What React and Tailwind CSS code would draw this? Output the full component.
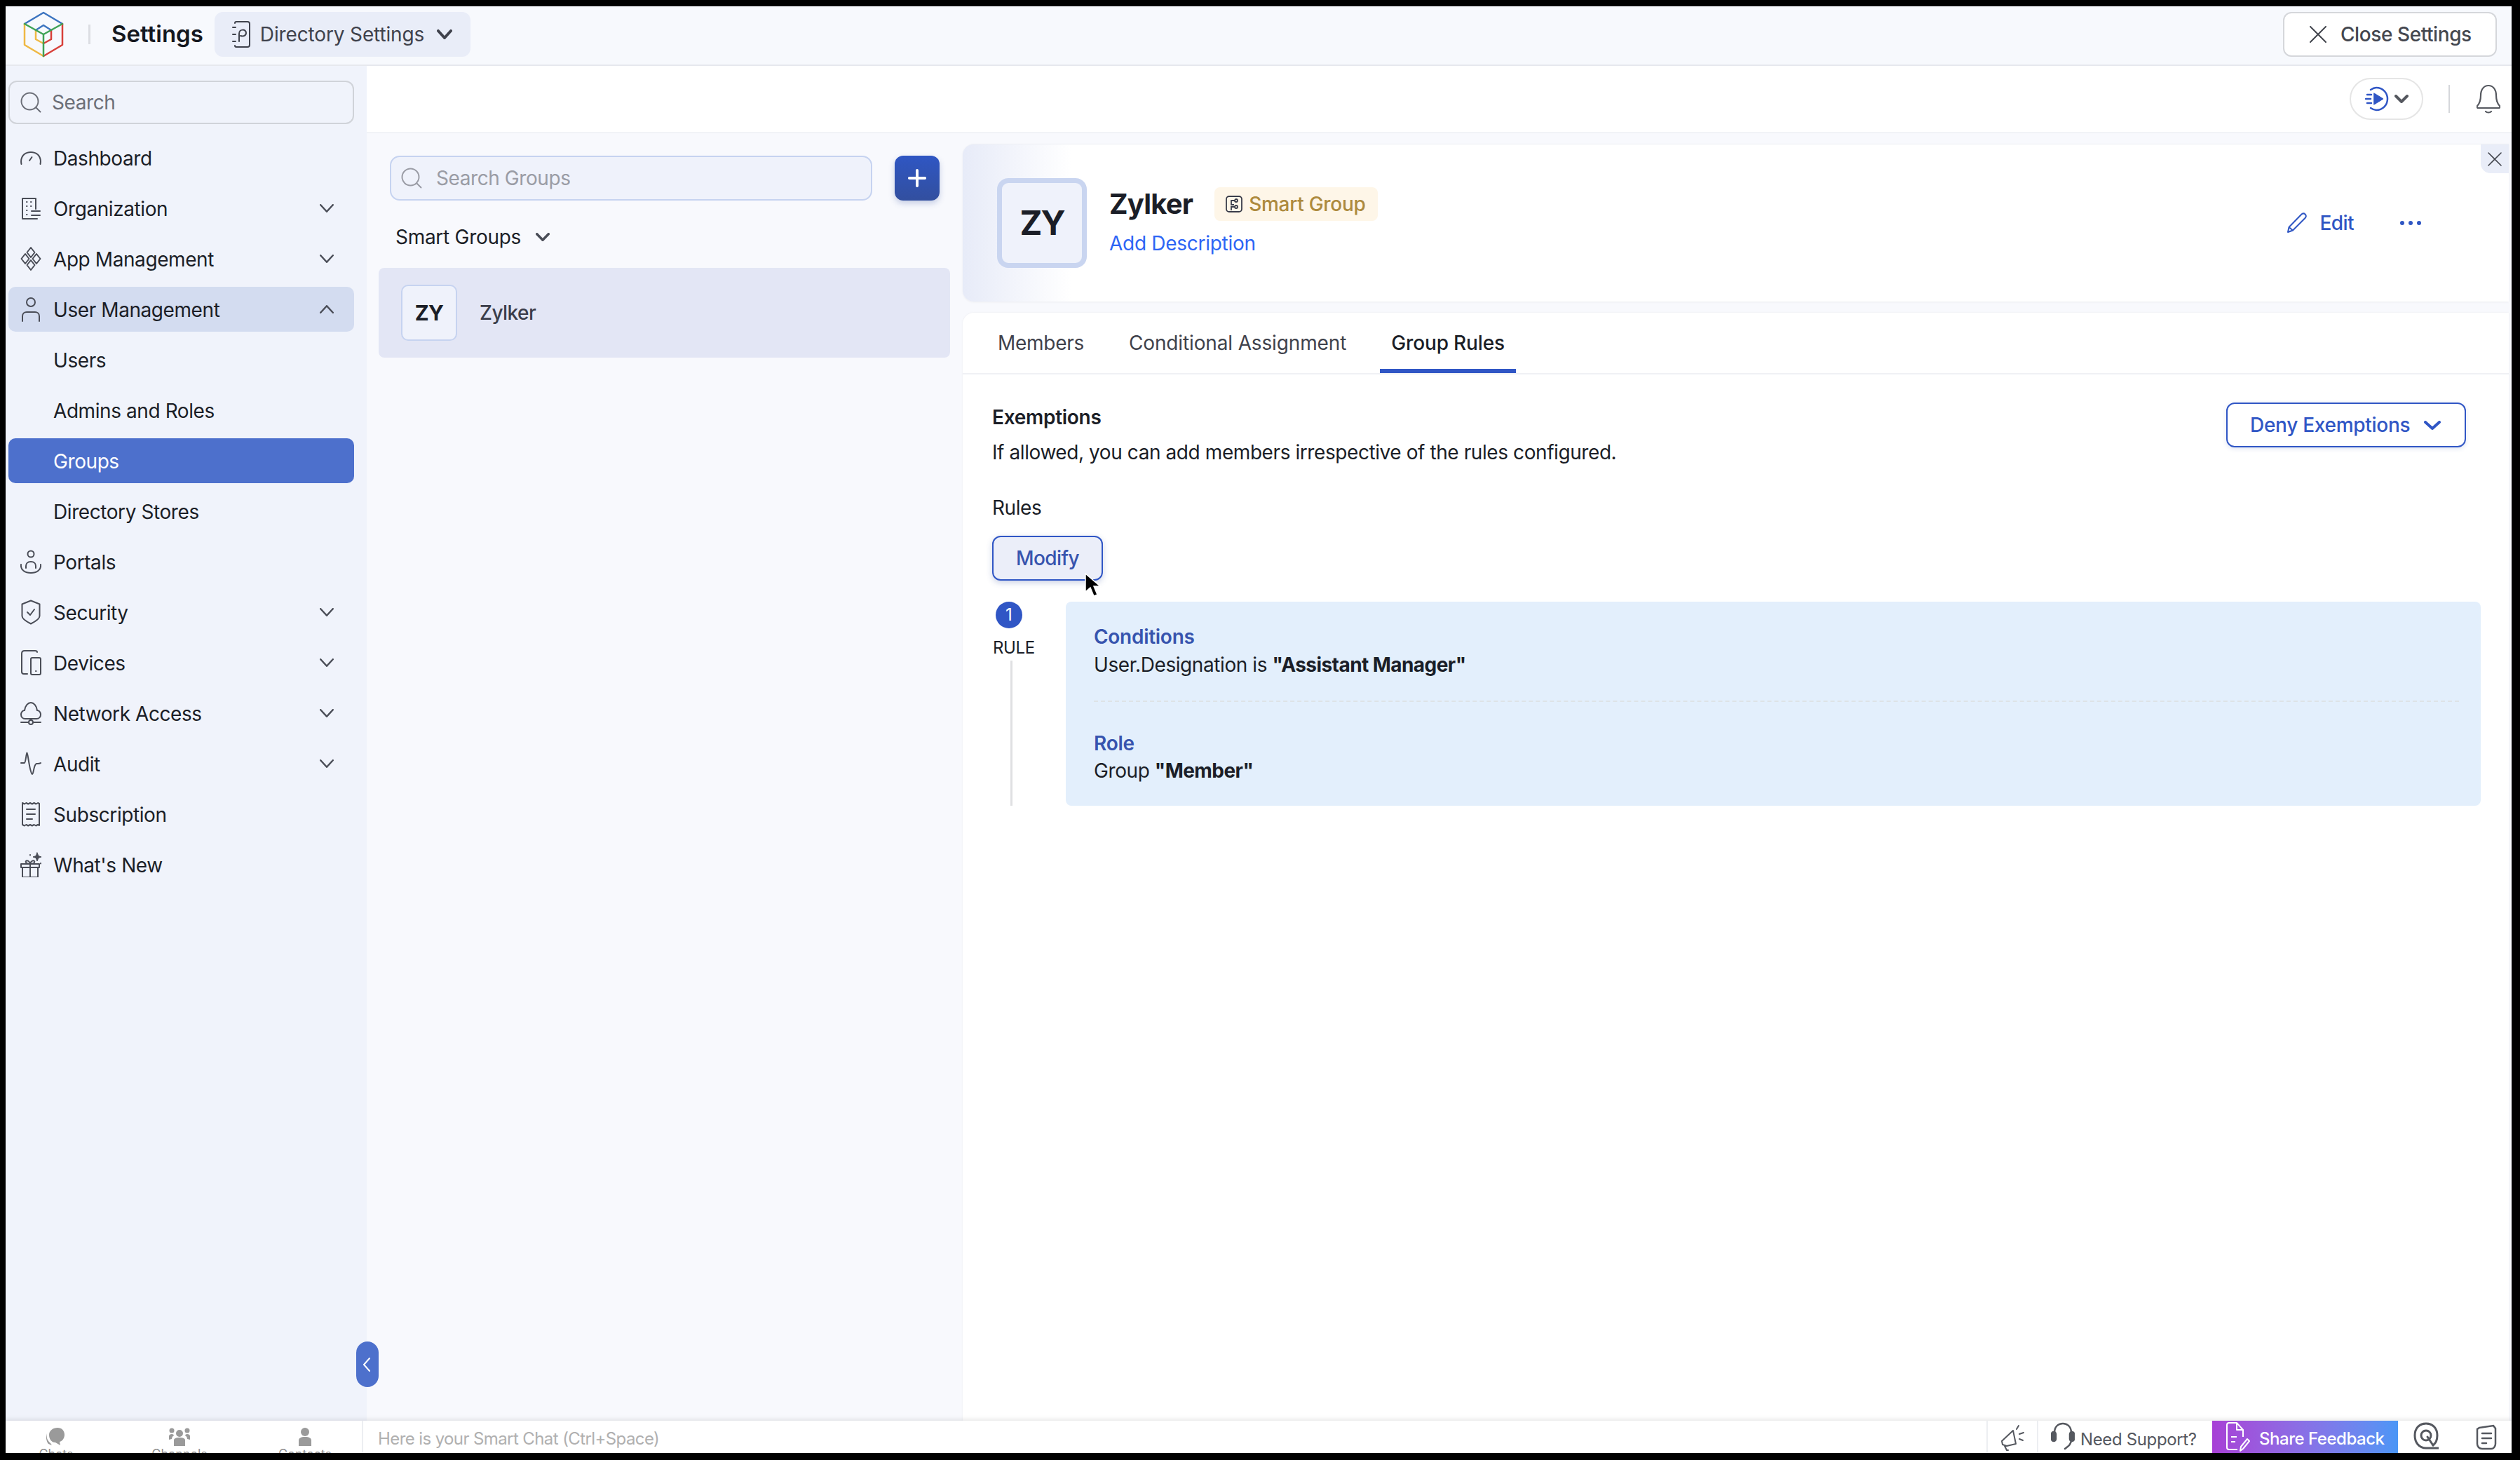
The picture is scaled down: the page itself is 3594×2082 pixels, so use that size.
import React from "react";
import { Search, Plus } from "lucide-react";

const Ico = ({ children, w = 30, h = 36, vb = "0 0 30 36", className = "" }) => (
  <svg
    width={w}
    height={h}
    viewBox={vb}
    fill="none"
    stroke="currentColor"
    strokeWidth="2"
    strokeLinecap="round"
    strokeLinejoin="round"
    className={`shrink-0 ${className}`}
  >
    {children}
  </svg>
);

// lucide's chevrons and crosses sit small in their box, these fill it
const Chevron = ({ w = 20, h = 12, stroke = 2.5, up = false, className = "" }) => (
  <svg width={w} height={h} viewBox={`0 0 ${w} ${h}`} fill="none" stroke="currentColor" strokeWidth={stroke} strokeLinecap="round" strokeLinejoin="round" className={`shrink-0 ${className}`}>
    {up ? (
      <path d={`M${stroke / 2} ${h - stroke / 2}L${w / 2} ${stroke / 2}L${w - stroke / 2} ${h - stroke / 2}`} />
    ) : (
      <path d={`M${stroke / 2} ${stroke / 2}L${w / 2} ${h - stroke / 2}L${w - stroke / 2} ${stroke / 2}`} />
    )}
  </svg>
);

const Cross = ({ size = 24, stroke = 2, className = "" }) => (
  <svg width={size} height={size} viewBox={`0 0 ${size} ${size}`} fill="none" stroke="currentColor" strokeWidth={stroke} strokeLinecap="round" className={`shrink-0 ${className}`}>
    <path d={`M1 1L${size - 1} ${size - 1}M${size - 1} 1L1 ${size - 1}`} />
  </svg>
);

const icons = {
  dashboard: (
    <Ico>
      <path d="M1.500 27c-1-5 0-10 3.500-13.500C8 11 11 10 15 10s7 1 10 3.500c3.500 3.500 4.500 8.500 3.500 13.500" />
      <path d="M13 22l3.500-5" />
    </Ico>
  ),
  organization: (
    <Ico>
      <path d="M3 33V4h19v15M3 33h21" />
      <path d="M9 9h.5M15 9h.5M9 15h.5M15 15h.5M9 21h.5M9 27h.5M16 22h12M16 28h12" />
    </Ico>
  ),
  apps: (
    <Ico>
      <path d="M15 2l5.500 7-5.500 7-5.500-7zM15 20l5.500 7-5.500 7-5.500-7zM7 11l5.500 7L7 25l-5.500-7zM23 11l5.500 7-5.500 7-5.500-7z" />
    </Ico>
  ),
  user: (
    <Ico>
      <circle cx="15" cy="8" r="6" />
      <path d="M3 35v-7c0-4 3-6 6-6h12c3 0 6 2 6 6v7" />
    </Ico>
  ),
  portals: (
    <Ico>
      <circle cx="15" cy="7" r="4.500" />
      <path d="M8 27v-3c0-3 2-6 7-6s7 3 7 6v3" />
      <path d="M1 22c-1 8 6 12 14 12s15-4 14-12" />
    </Ico>
  ),
  security: (
    <Ico>
      <path d="M15 1.500l12.500 5v17c0 4-6.500 8-12.500 11-6-3-12.500-7-12.500-11v-17z" />
      <path d="M10 18l4 4 6-8" />
    </Ico>
  ),
  devices: (
    <Ico>
      <path d="M24 3c0-1-1-2-3-2H6C3.500 1 2 2.500 2 5v26c0 2 1.500 3 3 3h5" />
      <rect x="15" y="11" width="14" height="24" rx="2" />
      <path d="M22 30h.5" />
    </Ico>
  ),
  network: (
    <Ico>
      <path d="M7 26c-4 0-6-3-6-6 0-4 3-6 5-6 1-7 5-11 9-11s8 4 9 11c2 0 5 2 5 6 0 3-2 6-6 6z" />
      <path d="M1 31h10M19 31h10M15 26v2" />
      <circle cx="15" cy="31" r="3" />
    </Ico>
  ),
  audit: (
    <Ico>
      <path d="M1 17h5c1.500 0 2.500-14 3.500-14.500C11 3 13 30 17 33c2 0 2-14 6-15 2 0 5 0 6-1" />
    </Ico>
  ),
  subscription: (
    <Ico>
      <path d="M3 2l2.800 1.500L8.400 2l2.800 1.500L14 2l2.800 1.500L19.600 2l2.800 1.500L25 2l2 1v31l-2-1-2.800 1.500-2.600-1.500-2.800 1.500L14 33l-2.800 1.500L8.400 33l-2.600 1.500L3 33z" />
      <path d="M9 11h12M9 18h12M9 25h8" />
    </Ico>
  ),
  gift: (
    <Ico>
      <path d="M3 22h22v14H3zM1 17h26v5H1zM14 17v19M14 17c-5 0-7-2-6-4 1-1.500 5-1 6 4 1-5 5-5.500 6-4 1 2-1 4-6 4z" />
      <path d="M24 1l1.800 4.500L30 7l-4.200 1.500L24 13l-1.800-4.500L18 7l4.200-1.500z" fill="currentColor" strokeWidth="1" />
      <path d="M14 4v.5M29 16v.5" />
    </Ico>
  ),
};

const navItems = [
  { label: "Dashboard", icon: "dashboard" },
  { label: "Organization", icon: "organization", arrow: "down" },
  { label: "App Management", icon: "apps", arrow: "down" },
  { label: "User Management", icon: "user", arrow: "up", open: true },
  { label: "Users" },
  { label: "Admins and Roles" },
  { label: "Groups", active: true },
  { label: "Directory Stores" },
  { label: "Portals", icon: "portals" },
  { label: "Security", icon: "security", arrow: "down" },
  { label: "Devices", icon: "devices", arrow: "down" },
  { label: "Network Access", icon: "network", arrow: "down" },
  { label: "Audit", icon: "audit", arrow: "down" },
  { label: "Subscription", icon: "subscription" },
  { label: "What's New", icon: "gift" },
];

const Logo = () => (
  <svg width="60" height="68" viewBox="32 14 60 68" fill="none" strokeWidth="2.500" strokeLinejoin="round" strokeLinecap="round" className="shrink-0">
    <path d="M35 33L62 17l27 16" stroke="#3b74c0" />
    <path d="M51 42l11-7 11 7" stroke="#3b74c0" />
    <path d="M35 33v30l27 16" stroke="#efb944" />
    <path d="M51 42v13l11 6" stroke="#efb944" />
    <path d="M89 33v30L62 79" stroke="#d8403a" />
    <path d="M73 42v13l-11 6" stroke="#d8403a" />
    <path d="M35 33l27 15 27-15M62 48v31" stroke="#3fa355" />
  </svg>
);

const BookIcon = ({ className = "" }) => (
  <svg width="26" height="38" viewBox="0 0 26 38" fill="none" stroke="currentColor" strokeWidth="2" strokeLinecap="round" strokeLinejoin="round" className={`shrink-0 ${className}`}>
    <path d="M4 3c0-1 1-2 2-2h16c2 0 3 1 3 3v30c0 2-1 3-3 3H6c-1 0-2-1-2-2" />
    <path d="M1 9h4M1 19h4M1 29h4" />
    <path d="M10 29v-11c0-7 10-7 10-1 0 5-6 5-8 4" />
  </svg>
);

function Header() {
  return (
    <header className="flex h-[85px] shrink-0 items-center border-b-2 border-[#e6e8ee] bg-[#f7f9fd] pb-[3px]">
      <div className="ml-[24px] flex items-center">
        <Logo />
        <div className="ml-[34px] h-[28px] w-[3px] bg-[#dcdee3]" />
        <span className="ml-[30px] text-[33px] font-semibold text-[#15181f]">Settings</span>
        <div className="ml-[16px] flex h-[64px] w-[365px] items-center rounded-[12px] bg-[#e9edf8] pl-[25px] text-[#3f424c]">
          <BookIcon />
          <span className="ml-[14px] text-[28px] tracking-[-0.005em]">Directory Settings</span>
          <Chevron w={22} h={14} stroke={4} className="ml-[18px]" />
        </div>
      </div>
      <div className="ml-auto mr-[21px] flex h-[64px] w-[305px] items-center rounded-[12px] border-2 border-[#d5d7db] bg-white pl-[36px] text-[#44474f]">
        <Cross size={24} stroke={2} />
        <span className="ml-[20px] text-[28px] font-medium tracking-[-0.015em]">Close Settings</span>
      </div>
    </header>
  );
}

function Sidebar() {
  return (
    <aside className="relative flex w-[515px] shrink-0 flex-col bg-[#f0f3fb] pl-[4px] pr-[18px] pt-[21px]">
      <div className="flex h-[62px] items-center rounded-[12px] border-2 border-[#d0d3d9] pl-[12px] text-[#6c6f78]">
        <Search size={36} strokeWidth={1.3} />
        <span className="ml-[12px] text-[28px] tracking-[-0.015em]">Search</span>
      </div>
      <nav className="mt-[16px] flex flex-col gap-[8px]">
        {navItems.map((item) => (
          <div
            key={item.label}
            className={`flex h-[64px] items-center rounded-[10px] pl-[17px] ${
              item.active ? "bg-[#4d70cc] text-white" : item.open ? "bg-[#d3dcf0] text-[#1b1e27]" : "text-[#1b1e27]"
            }`}
          >
            <span className="flex w-[30px] justify-center text-[#4a4d57]">{item.icon && icons[item.icon]}</span>
            <span className="ml-[17px] pt-[2px] text-[28px] tracking-[-0.015em]">{item.label}</span>
            {item.arrow === "down" && <Chevron className="ml-auto mr-[29px] text-[#4a4d57]" />}
            {item.arrow === "up" && <Chevron up className="ml-auto mr-[29px] text-[#4a4d57]" />}
          </div>
        ))}
      </nav>
      <div className="absolute bottom-[48px] right-[-17px] z-10 flex h-[65px] w-[32px] items-center justify-center rounded-full bg-[#4d70cc] pr-[3px] text-white">
        <svg width="12" height="20" viewBox="0 0 12 20" fill="none" stroke="currentColor" strokeWidth="2" strokeLinecap="round" strokeLinejoin="round">
          <path d="M10 1L2 10l8 9" />
        </svg>
      </div>
    </aside>
  );
}

function GroupList() {
  return (
    <section className="w-[850px] shrink-0 pt-[32px]">
      <div className="ml-[33px] flex items-center gap-[32px]">
        <div className="flex h-[64px] w-[688px] items-center rounded-[14px] border-2 border-[#c6d3f0] bg-[#eff2fb] pl-[11px] text-[#9a9ca5]">
          <Search size={36} strokeWidth={1.3} />
          <span className="ml-[17px] text-[28px] tracking-[-0.015em]">Search Groups</span>
        </div>
        <div className="flex h-[64px] w-[64px] items-center justify-center rounded-[12px] bg-gradient-to-b from-[#2f56c3] to-[#324f9f] text-white shadow-[0_4px_8px_rgba(50,80,160,0.25)]">
          <Plus size={38} strokeWidth={2.500} />
        </div>
      </div>
      <div className="ml-[41px] mt-[32px] flex h-[40px] items-center text-[#1b1e27]">
        <span className="text-[28px] tracking-[-0.01em]">Smart Groups</span>
        <Chevron stroke={3.5} className="ml-[21px] text-[#4a4d57]" />
      </div>
      <div className="ml-[17px] mt-[24px] flex h-[128px] w-[815px] items-center rounded-[8px] bg-[#e3e6f5] pl-[32px]">
        <div className="flex h-[80px] w-[80px] items-center justify-center rounded-[10px] border-2 border-[#c6d3f0] bg-[#eff2fb] text-[30px] font-bold tracking-[-0.02em] text-[#1b1e27]">
          ZY
        </div>
        <span className="ml-[32px] text-[28px] font-medium tracking-[-0.02em] text-[#3a3d4a]">Zylker</span>
      </div>
    </section>
  );
}

function GroupHeader() {
  return (
    <div className="relative flex h-[225px] shrink-0 items-center rounded-l-[16px] border-t border-[#eef0f5] bg-gradient-to-r from-[#e7ebf8] to-white to-[7%] pl-[49px] pr-[125px] shadow-[0_1px_3px_rgba(0,0,0,0.05)]">
      <div className="flex h-[128px] w-[128px] items-center justify-center rounded-[16px] border-[7px] border-[#c9d5f0] bg-[#eff2fb] text-[48px] font-bold tracking-[-0.04em] text-[#1b1e27]">
        ZY
      </div>
      <div className="ml-[32px] pb-[2px]">
        <div className="flex items-center">
          <span className="text-[40px] font-bold leading-[48px] tracking-[-0.02em] text-[#1b1e27]">Zylker</span>
          <div className="ml-[31px] flex h-[48px] w-[233px] items-center rounded-[8px] bg-[#fef6e8] pl-[16px] text-[#ad8a3e]">
            <svg width="24" height="24" viewBox="0 0 24 24" fill="none" stroke="#3a3d4a" strokeWidth="1.800" className="shrink-0">
              <rect x="1" y="1" width="22" height="22" rx="4" />
              <circle cx="15" cy="7" r="2" />
              <circle cx="15" cy="16" r="2" />
              <path d="M13 7H8v6h4M13 16H8v5" />
            </svg>
            <span className="ml-[9px] text-[28px] font-medium tracking-[-0.01em]">Smart Group</span>
          </div>
        </div>
        <div className="mt-[12px] text-[28px] leading-[40px] tracking-[-0.01em] text-[#2d65f5]">Add Description</div>
      </div>
      <div className="ml-auto flex items-center text-[#2f56c3]">
        <svg width="30" height="30" viewBox="0 0 30 30" fill="none" stroke="currentColor" strokeWidth="2" strokeLinejoin="round" className="shrink-0">
          <path d="M2 28l1.500-7L21 3c2-2 4-2 5.500-.5S28.500 6 26.500 8L9 25.500z" />
          <path d="M3.500 21L9 25.500" />
        </svg>
        <span className="ml-[17px] text-[28px] font-medium tracking-[-0.02em]">Edit</span>
        <div className="ml-[66px] flex items-center gap-[6px]">
          <span className="h-[6px] w-[6px] rounded-full bg-[#2f56c3]" />
          <span className="h-[6px] w-[6px] rounded-full bg-[#2f56c3]" />
          <span className="h-[6px] w-[6px] rounded-full bg-[#2f56c3]" />
        </div>
      </div>
      <div className="absolute right-0 top-0 flex h-[41px] w-[40px] items-center justify-center rounded-bl-[14px] bg-[#e9edf8] text-[#44474f]">
        <Cross size={20} stroke={1.6} />
      </div>
    </div>
  );
}

function Tabs() {
  return (
    <div className="flex h-[88px] shrink-0 items-stretch gap-[32px] border-b-2 border-[#f0f1f5] pl-[34px]">
      <div className="flex items-center border-b-[6px] border-transparent px-[16px] pt-[6px] text-[28px] tracking-[-0.01em] text-[#3f424c]">Members</div>
      <div className="flex items-center border-b-[6px] border-transparent px-[16px] pt-[6px] text-[28px] tracking-[-0.005em] text-[#3f424c]">Conditional Assignment</div>
      <div className="flex items-center border-b-[6px] border-[#3056c5] px-[16px] pt-[6px] text-[28px] font-medium tracking-[-0.005em] text-[#1b1e27]">Group Rules</div>
    </div>
  );
}

function RulesPanel() {
  return (
    <div className="flex-1 pl-[42px] pr-[40px]">
      <div className="flex items-start justify-between pr-[21px] pt-[40px]">
        <div className="mt-[1px]">
          <div className="text-[28px] font-semibold leading-[40px] tracking-[-0.01em] text-[#1b1e27]">Exemptions</div>
          <div className="mt-[10px] text-[28px] leading-[40px] tracking-[-0.015em] text-[#1b1e27]">If allowed, you can add members irrespective of the rules configured.</div>
        </div>
        <div className="flex h-[64px] w-[342px] items-center rounded-[12px] border-2 border-[#3056c5] pl-[32px] text-[#3056c5] shadow-[0_2px_6px_rgba(50,80,160,0.15)]">
          <span className="text-[28px] font-medium tracking-[-0.01em]">Deny Exemptions</span>
          <Chevron w={24} h={13} stroke={4} className="ml-[20px]" />
        </div>
      </div>
      <div className="mt-[39px] text-[28px] leading-[40px] tracking-[-0.015em] text-[#1b1e27]">Rules</div>
      <div className="relative mt-[20px] flex h-[64px] w-[158px] items-center justify-center rounded-[12px] border-2 border-[#3056c5] bg-[#ebeef9] text-[28px] font-medium tracking-[-0.02em] text-[#3754ae] shadow-[0_3px_8px_rgba(50,80,160,0.25)]">
        Modify
        <svg width="24" height="36" viewBox="0 0 24 36" className="absolute left-[129px] top-[51px] z-10">
          <path d="M2 1v26l7-6 5 12 5-2-5-12h9z" fill="#000" stroke="#fff" strokeWidth="1.500" />
        </svg>
      </div>
      <div className="mt-[30px] flex h-[291px]">
        <div className="flex w-[105px] shrink-0 flex-col">
          <div className="ml-[5px] flex h-[38px] w-[38px] items-center justify-center rounded-full bg-[#3056c5] text-[24px] text-white">1</div>
          <div className="ml-[1px] mt-[14px] text-[24px] leading-[28px] tracking-[-0.015em] text-[#1b1e27]">RULE</div>
          <div className="ml-[26px] mt-[4px] w-[3px] flex-1 bg-[#dfe0e2]" />
        </div>
        <div className="flex-1 rounded-[8px] bg-[#e3effc] pl-[40px] pr-[31px] pt-[30px]">
          <div className="text-[28px] font-semibold leading-[40px] tracking-[-0.01em] text-[#3754ae]">Conditions</div>
          <div className="text-[28px] leading-[40px] tracking-[-0.015em] text-[#1b1e27]">
            User.Designation is <b className="font-bold tracking-[-0.02em]">"Assistant Manager"</b>
          </div>
          <div className="mt-[31px] border-t-2 border-dashed border-[#dde3e6]" />
          <div className="mt-[39px] text-[28px] font-semibold leading-[40px] tracking-[-0.01em] text-[#3754ae]">Role</div>
          <div className="-mt-[1px] text-[28px] leading-[40px] tracking-[-0.015em] text-[#1b1e27]">
            Group <b className="font-bold tracking-[-0.02em]">"Member"</b>
          </div>
        </div>
      </div>
    </div>
  );
}

const ChatTab = ({ label, children, className = "" }) => (
  <div className={`flex w-[100px] flex-col items-center ${className}`}>
    <svg width="44" height="26" viewBox="0 0 44 26" fill="#9a9a9a" className="shrink-0">
      {children}
    </svg>
    <span className="mt-[2px] text-[18px] leading-[20px] text-[#8f8f8f]">{label}</span>
  </div>
);

function BottomBar() {
  return (
    <footer className="relative z-10 flex h-[46px] shrink-0 overflow-hidden bg-white shadow-[0_-2px_6px_rgba(0,0,0,0.1)]">
      <div className="flex w-[510px] shrink-0 border-r-2 border-[#eceef2] pl-[22px] pt-[10px]">
        <ChatTab label="Chats">
          <path d="M24 0c6 0 10 4 10 10 0 5-3 9-7 10l1 5-7-4c-6 0-9-5-9-11S18 0 24 0z" />
          <path d="M9 8c-1 5 0 10 5 14l2 3-5-2c-3-4-4-10-2-15z" />
        </ChatTab>
        <ChatTab label="Channels" className="ml-[76px]">
          <circle cx="22" cy="8" r="5" />
          <path d="M14 26V18c0-3 3-4 8-4s8 1 8 4v8z" />
          <circle cx="11" cy="4" r="3.500" />
          <circle cx="33" cy="4" r="3.500" />
          <path d="M7 17v-5c0-2 2-3 4-3s3 1 3 2c-2 1-3 3-3 5zM37 17v-5c0-2-2-3-4-3s-3 1-3 2c2 1 3 3 3 5z" />
        </ChatTab>
        <ChatTab label="Contacts" className="ml-[79px]">
          <circle cx="22" cy="6" r="6" />
          <path d="M13 26V18c0-3 3-5 9-5s9 2 9 5v8z" />
        </ChatTab>
      </div>
      <div className="ml-[21px] flex flex-1 items-center pt-[6px] text-[24px] tracking-[-0.025em] text-[#b0b0b0]">Here is your Smart Chat (Ctrl+Space)</div>
      <div className="flex w-[74px] items-center justify-center border-x-2 border-[#eceef2] text-[#55585f]">
        <svg width="34" height="40" viewBox="0 0 34 40" fill="none" stroke="currentColor" strokeWidth="2" strokeLinejoin="round" strokeLinecap="round" className="mt-[4px]">
          <path d="M18 9L2 24l1 5 6 2 13-3zM6 31l3 6h2M26 2l-3 5M33 12l-6 2M32 23l-5-2" />
        </svg>
      </div>
      <div className="flex w-[248px] items-center pl-[18px] text-[#55585f]">
        <svg width="34" height="44" viewBox="0 0 34 44" fill="none" stroke="currentColor" strokeWidth="2.500" strokeLinecap="round" className="shrink-0">
          <path d="M5 16C5 8 10 3 17 3s12 5 12 13v10c0 8-6 10-9 13" />
          <rect x="1" y="15" width="6" height="13" rx="3" fill="currentColor" />
          <rect x="27" y="15" width="6" height="13" rx="3" fill="currentColor" />
        </svg>
        <span className="ml-[8px] pt-[7px] text-[24px] tracking-[-0.015em]">Need Support?</span>
      </div>
      <div className="flex w-[265px] items-center bg-gradient-to-r from-[#a73fd6] to-[#4a96f6] pl-[20px] text-white">
        <svg width="34" height="44" viewBox="0 0 34 44" fill="none" stroke="currentColor" strokeWidth="2" strokeLinejoin="round" className="shrink-0">
          <path d="M16 40H4c-2 0-3-1-3-3V5c0-2 1-3 3-3h11l9 10v10" />
          <path d="M15 2v10h9M7 22h8M7 29h6" />
          <path d="M20 42l1-6 9-11 3 3-9 11z" />
        </svg>
        <span className="ml-[13px] pt-[5px] text-[24px] font-medium tracking-[-0.02em]">Share Feedback</span>
      </div>
      <div className="flex flex-1 max-w-[162px] items-center pl-[22px] text-[#55585f]">
        <svg width="36" height="44" viewBox="0 0 36 44" fill="none" stroke="currentColor" strokeWidth="3" strokeLinecap="round" className="shrink-0">
          <path d="M36 38H18C8 38 2 30 2 20 2 10 8 3 18 3s16 7 16 17c0 6-2 11-6 14" />
          <circle cx="18" cy="20" r="7" />
          <path d="M20 22l8 12" />
        </svg>
        <svg width="32" height="38" viewBox="0 0 32 38" fill="none" stroke="currentColor" strokeWidth="2.500" strokeLinecap="round" className="ml-[52px] shrink-0">
          <path d="M6 6l20-3 3 4v22c0 4-3 7-6 7H10c-4 0-7-3-7-7V8z" />
          <path d="M10 14h13M10 21h13M10 28h6" />
        </svg>
      </div>
    </footer>
  );
}

export default function App() {
  return (
    <div className="h-screen overflow-hidden bg-black pb-[10px] pl-[8px] pr-[12px] pt-[9px] font-['Inter',sans-serif]">
      <div className="flex h-full flex-col bg-white">
        <Header />
        <div className="flex min-h-0 flex-1">
          <Sidebar />
          <div className="flex min-w-0 flex-1 flex-col">
            <div className="flex h-[96px] shrink-0 items-center justify-end border-b-2 border-[#f1f3f7] bg-white pr-[16px]">
              <div className="flex h-[60px] w-[105px] items-center rounded-full border-2 border-[#e5e5e5] pl-[20px] text-[#3056c5]">
                <svg width="34" height="36" viewBox="0 0 34 36" fill="none" stroke="currentColor" strokeWidth="2.500" strokeLinecap="round" className="shrink-0">
                  <path d="M8 5c3-2 5-3 8-3 9 0 16 7 16 16s-7 16-16 16c-3 0-5-1-8-3" />
                  <path d="M13 10l13 8-13 8z" fill="currentColor" strokeWidth="1" />
                  <path d="M3 12h6M1 18h7M3 24h6" />
                </svg>
                <Chevron w={20} h={12} stroke={4} className="ml-[8px] text-[#55585f]" />
              </div>
              <div className="ml-[36px] h-[40px] w-[2px] bg-[#d5d7db]" />
              <svg width="34" height="42" viewBox="0 0 34 42" fill="none" stroke="#55585f" strokeWidth="2.200" strokeLinejoin="round" strokeLinecap="round" className="ml-[38px] shrink-0">
                <path d="M6 16C6 7 11 2 17 2s11 5 11 14c0 8 2 12 5 15 1 2 0 3-2 3H3c-2 0-3-1-2-3 3-3 5-7 5-15z" />
                <path d="M13 39c2 2 6 2 8 0" />
              </svg>
            </div>
            <div className="flex min-h-0 flex-1 bg-[#f8f9fd]">
              <GroupList />
              <div className="flex min-w-0 flex-1 flex-col pr-[4px] pt-[15px]">
                <GroupHeader />
                <div className="mt-[16px] flex flex-1 flex-col rounded-tl-[16px] bg-white shadow-[0_0_3px_rgba(0,0,0,0.06)]">
                  <Tabs />
                  <RulesPanel />
                </div>
              </div>
            </div>
          </div>
        </div>
        <BottomBar />
      </div>
    </div>
  );
}
